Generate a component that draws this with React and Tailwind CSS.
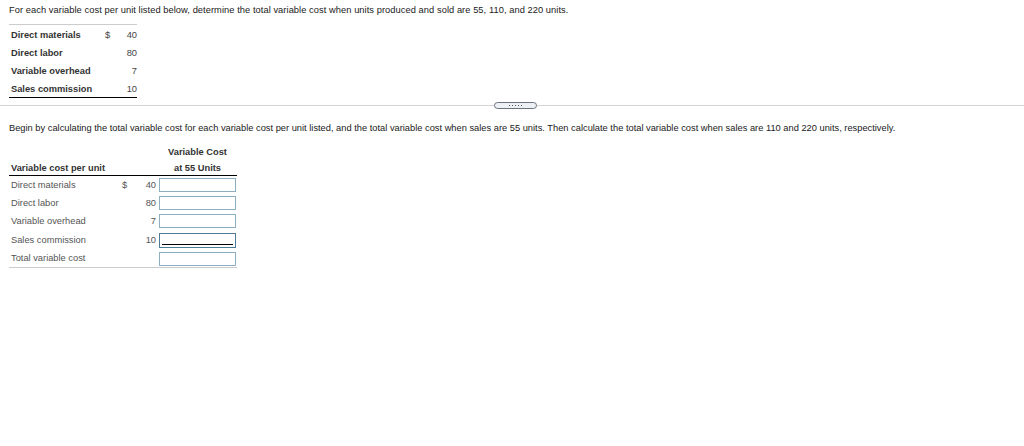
import React from "react"

const topRows = [
  { label: "Direct materials", sign: "$", value: "40" },
  { label: "Direct labor", sign: "", value: "80" },
  { label: "Variable overhead", sign: "", value: "7" },
  { label: "Sales commission", sign: "", value: "10" },
]

const costRows = [
  { label: "Direct materials", sign: "$", value: "40", h: "h-[18px]", input: "h-[14px] border-[#8eafc2]" },
  { label: "Direct labor", sign: "", value: "80", h: "h-[18px]", input: "h-[14px] border-[#8eafc2]" },
  { label: "Variable overhead", sign: "", value: "7", h: "h-[18px]", input: "h-[14px] border-[#8eafc2]" },
  { label: "Sales commission", sign: "", value: "10", h: "h-[20px]", input: "h-[15px] border-[#4d7c99]", underline: true },
  { label: "Total variable cost", sign: "", value: "", h: "h-[17px]", input: "h-[14px] border-[#8eafc2]" },
]

const TopTable = () => (
  <div className="ml-[9px] mt-[8px] w-[128px] border-t border-b border-t-[#cccccc] border-b-black text-[9.3px] font-bold text-[#333333]">
    {topRows.map((row) => (
      <div key={row.label} className="flex h-[18px] pt-[5px] leading-[11px]">
        <div className="w-[95px] pl-[2px]">{row.label}</div>
        <div className="w-[14px] pl-[1px] font-normal text-[#444444]">{row.sign}</div>
        <div className="w-[19px] text-right font-normal text-[#444444]">{row.value}</div>
      </div>
    ))}
  </div>
)

const Divider = () => (
  <div className="flex items-center h-[7px] mt-[4px]">
    <div className="w-[494px] h-px bg-[#d4d4d4]" />
    <button className="flex items-center justify-center gap-[2px] w-[43px] h-[7px] rounded-full border border-[#6b7280] bg-[#eef1f4]">
      {[0, 1, 2, 3, 4].map((d) => (
        <span key={d} className="w-px h-px bg-[#4b5563]" />
      ))}
    </button>
    <div className="flex-1 h-px bg-[#d4d4d4]" />
  </div>
)

const CostTable = () => (
  <div className="ml-[9px] w-[228px] text-[9.3px] leading-[11px]">
    <div className="flex h-[18px] items-center font-bold text-[#333333]">
      <div className="w-[150px]" />
      <div className="w-[77px] text-center">Variable Cost</div>
    </div>
    <div className="flex h-[15px] pt-[2px] font-bold text-[#333333] border-b border-black">
      <div className="w-[150px] pl-[2px]">Variable cost per unit</div>
      <div className="w-[77px] text-center">at 55 Units</div>
    </div>
    <div className="border-b border-[#cccccc] text-[#555555]">
      {costRows.map((row) => (
        <div key={row.label} className={`flex items-center ${row.h}`}>
          <div className="w-[110px] pl-[2px]">{row.label}</div>
          <div className="w-[14px] pl-[3px]">{row.sign}</div>
          <div className="w-[24px] pr-[1px] text-right">{row.value}</div>
          <div className={`relative ml-[2px] w-[77px] border bg-white ${row.input}`}>
            {row.underline && (
              <div className="absolute left-[2px] right-[2px] bottom-[2px] h-px bg-black" />
            )}
          </div>
        </div>
      ))}
    </div>
  </div>
)

export default function App() {
  return (
    <div className="w-[1024px] h-[446px] bg-white font-['Liberation_Sans',Arial,sans-serif] overflow-hidden">
      <p className="px-[9px] pt-[4px] text-[9.3px] leading-[12px] tracking-[0.06px] text-[#1a1a1a]">
        For each variable cost per unit listed below, determine the total variable cost when units produced and sold are 55, 110, and 220 units.
      </p>
      <TopTable />
      <Divider />
      <p className="px-[9px] mt-[14px] text-[9.3px] leading-[11px] text-[#1a1a1a]">
        Begin by calculating the total variable cost for each variable cost per unit listed, and the total variable cost when sales are 55 units. Then calculate the total variable cost when sales are 110 and 220 units, respectively.
      </p>
      <div className="mt-[9px]">
        <CostTable />
      </div>
    </div>
  )
}
